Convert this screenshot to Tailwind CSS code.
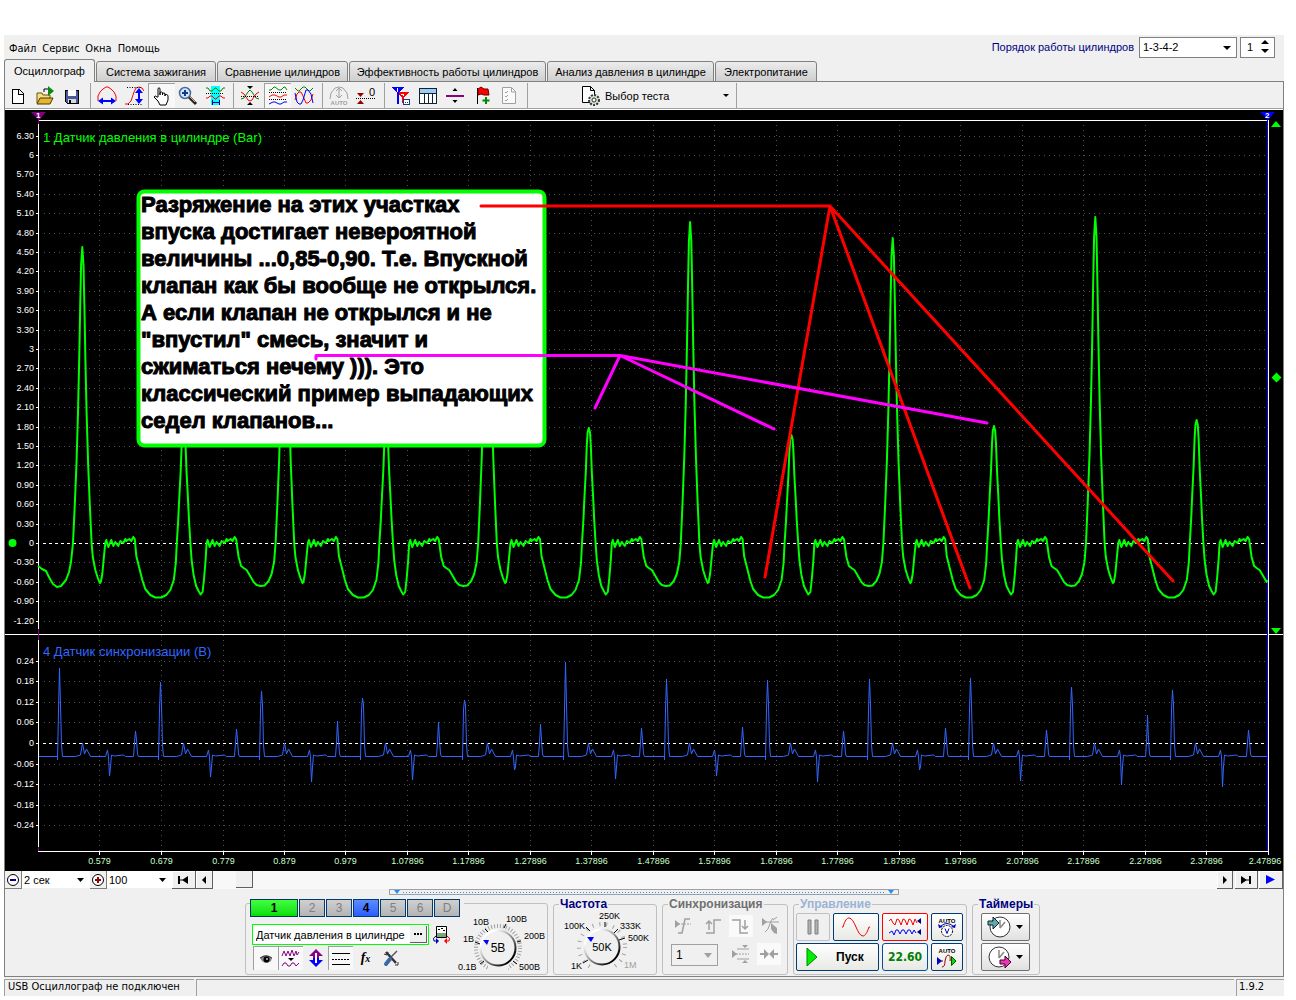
<!DOCTYPE html>
<html lang="ru">
<head>
<meta charset="utf-8">
<title>USB Осциллограф</title>
<script src="https://cdn.jsdelivr.net/npm/@tailwindcss/browser@4"></script>
</head>
<body class="bg-white pt-[35px] text-[11px] leading-[14px] text-black font-['Liberation_Sans',Arial,sans-serif]">
<div class="mr-3 ml-1 bg-[#f0f0f0]">

  <!-- menu bar -->
  <header class="flex h-6 items-center justify-between pr-[9px] pl-[5px]">
    <nav class="flex gap-[6px] pt-[3px] font-['DejaVu_Sans_Condensed','DejaVu_Sans',sans-serif]">
      <a href="#">Файл</a><a href="#">Сервис</a><a href="#">Окна</a><a href="#">Помощь</a>
    </nav>
    <div class="flex items-center gap-[3px]">
      <label for="order" class="mr-[2px] text-[#000080]">Порядок работы цилиндров</label>
      <div class="relative">
        <select id="order" class="h-[21px] w-[98px] appearance-none border border-[#808080] bg-white px-[3px]"><option>1-3-4-2</option></select>
        <svg class="pointer-events-none absolute top-[9px] right-[6px]" width="8" height="5"><path d="M0 0h8L4 4z"/></svg>
      </div>
      <div class="relative">
        <input aria-label="Номер цилиндра" value="1" class="h-[21px] w-[35px] border border-[#808080] bg-white px-[6px]">
        <svg class="pointer-events-none absolute top-[3px] right-[6px]" width="8" height="14"><path d="M0 4h8L4 0zM0 9h8L4 13z"/></svg>
      </div>
    </div>
  </header>

  <!-- tabs -->
  <div role="tablist" class="relative flex items-end gap-px">
    <div class="absolute inset-x-0 bottom-0 border-b border-[#808080]"></div>
    <button role="tab" class="relative h-[23px] w-[91px] rounded-t-[3px] border border-b-0 border-[#808080] bg-[#f0f0f0]">Осциллограф</button>
    <button role="tab" class="relative h-[21px] w-[120px] rounded-t-[3px] border border-[#808080] bg-linear-to-b from-[#ececec] to-[#cfcfcf]">Система зажигания</button>
    <button role="tab" class="relative h-[21px] w-[131px] rounded-t-[3px] border border-[#808080] bg-linear-to-b from-[#ececec] to-[#cfcfcf]">Сравнение цилиндров</button>
    <button role="tab" class="relative h-[21px] w-[197px] rounded-t-[3px] border border-[#808080] bg-linear-to-b from-[#ececec] to-[#cfcfcf]">Эффективность работы цилиндров</button>
    <button role="tab" class="relative h-[21px] w-[167px] rounded-t-[3px] border border-[#808080] bg-linear-to-b from-[#ececec] to-[#cfcfcf]">Анализ давления в цилиндре</button>
    <button role="tab" class="relative h-[21px] w-[102px] rounded-t-[3px] border border-[#808080] bg-linear-to-b from-[#ececec] to-[#cfcfcf]">Электропитание</button>
  </div>

  <main class="border-x border-b border-[#808080]">
    <!-- toolbar -->
    <div class="flex h-7 items-center border-b border-white shadow-[inset_0_-1px_#a0a0a0]">
      <button aria-label="Новый" class="h-[25px] w-[27px] pl-[2px]"><svg width="20" height="20" shape-rendering="crispEdges"><path d="M5 3h7l4 4v10H5zM11 3v5h5" fill="#fff" stroke="#000"/></svg></button>
      <button aria-label="Открыть" class="h-[25px] w-[27px] pl-[3px]"><svg width="20" height="20"><path d="M2 17V7h5l1 2h7v8z" fill="#f5e08a" stroke="#665500"/><path d="M2 18l3-6h13l-3 6z" fill="#e0b830" stroke="#553300"/><path d="M13 0l6 5-6 5z" fill="#0a8a10"/><path d="M9 6V3h4" fill="none" stroke="#000"/></svg></button>
      <button aria-label="Сохранить" class="h-[25px] w-[27px] pl-[2px]"><svg width="20" height="20" shape-rendering="crispEdges"><path d="M4 4h13v13H6l-2-2z" fill="#4a5c98" stroke="#000"/><path d="M7 4h8v6H7z" fill="#fff"/><path d="M7 13h8v4H7z" fill="#d8d8d8"/><path d="M8 14h2v3H8z" fill="#000"/></svg></button>
      <span class="mr-[3px] ml-1 h-[25px] w-px bg-[#a0a0a0]"></span>
      <button aria-label="Ширина" class="h-[25px] w-[27px] pl-[3px]"><svg width="20" height="20"><path d="M1 15V10l2-4 3-3 3-2h2l3 2 3 3 2 4v5" fill="none" stroke="#f00"/><path d="M4 15h12" stroke="#00f" stroke-width="2"/><path d="M1 15l5-3.500v7zM19 15l-5-3.500v7z" fill="#00f"/></svg></button>
      <button aria-label="Высота" class="h-[25px] w-[27px] pl-[3px]"><svg width="20" height="20"><path d="M1 18h3l3-3 3-9 2-4 3-1 3 1 2 3" fill="none" stroke="#f00"/><path d="M3 1.500h14M4 18.500h14" stroke="#000" stroke-dasharray="1 1.500"/><path d="M15 5v10" stroke="#00f" stroke-width="2"/><path d="M15 2l-4 5h8zM15 18l-4-5h8z" fill="#00f"/></svg></button>
      <button aria-label="Рука" class="h-[25px] w-[27px] border-t border-l border-[#a0a0a0] bg-[#f8f8f8] pl-[3px]"><svg width="20" height="20"><path d="M6 11V2.500Q7 1 8 2.500V9V6.500Q9.500 5.500 10.500 6.500V9V7.500Q12 6.500 13 7.500V10V8.500Q14.500 8 16 9.500V14L14 19H8L6 15 2 11Q3 9 5 11z" fill="#fff" stroke="#000"/></svg></button>
      <button aria-label="Лупа" class="h-[25px] w-[27px] pl-[3px]"><svg width="20" height="20"><path d="M11 11l7 7" stroke="#222" stroke-width="3"/><path d="M12 11l5 5" stroke="#e0b050"/><circle cx="7" cy="7" r="5.500" fill="#cfe6ff" stroke="#4a6a98" stroke-width="1.500"/><path d="M4 7h6M7 4v6" stroke="#123a90" stroke-width="2"/></svg></button>
      <button aria-label="Участок" class="h-[25px] w-[27px] pl-[3px]"><svg width="20" height="20"><path d="M6 0h9v19H6z" fill="#0ff"/><path d="M1 2h2l2 3h2l3-3h1l3 3h2l2-3h2" fill="none" stroke="#080"/><path d="M1 7.500h18" stroke="#000" stroke-dasharray="1 1"/><path d="M1 12h2l2-2h2l3 3h1l3-3h2l2 2h2" fill="none" stroke="#f00"/><path d="M7 16.500h8M7.500 14v5M14.500 14v5" stroke="#008"/></svg></button>
      <span class="mr-[3px] ml-1 h-[25px] w-px bg-[#a0a0a0]"></span>
      <button aria-label="Совместить" class="h-[25px] w-[27px] pl-[3px]"><svg width="20" height="20"><path d="M1 13l3-1 4-6 2-2 2 2 4 6 3 1" fill="none" stroke="#080"/><path d="M1 6l3 2 4 6 2 1 2-1 4-6 3-2" fill="none" stroke="#f00"/><path d="M1 10.500h18" stroke="#000" stroke-dasharray="1 1"/><path d="M7 0h6l-3 3zM7 19h6l-3-3z"/></svg></button>
      <button aria-label="Разделить" class="h-[25px] w-[27px] border-t border-l border-[#a0a0a0] bg-[#f8f8f8] pl-[3px]"><svg width="20" height="20"><path d="M1 4h2l3-3h1l4 3h2l3-3h1l2 3" fill="none" stroke="#080"/><path d="M1 11l3-2h3l4 2h2l3-2h3" fill="none" stroke="#f00"/><path d="M1 18l4-2h2l4 2h2l3-2h3" fill="none" stroke="#00f"/><path d="M1 6.500h18M1 13.500h18" stroke="#000" stroke-dasharray="1 1"/></svg></button>
      <button aria-label="Наложить" class="h-[25px] w-[27px] pl-[3px]"><svg width="20" height="20"><path d="M1 2l3 3h1l4-4h2l4 4h1l3-3" fill="none" stroke="#080"/><path d="M1 14l2-6 2-2h2l2 4 3 7h2l3-3 2-6" fill="none" stroke="#f00"/><path d="M1 7l2 9 2 2h2l2-4 3-10h2l3 4 2 9" fill="none" stroke="#00f"/></svg></button>
      <span class="mr-[3px] ml-1 h-[25px] w-px bg-[#a0a0a0]"></span>
      <button aria-label="Авто" class="h-[25px] w-[27px] pl-[3px]"><svg width="20" height="20"><path d="M1 13l1-6 4-5 4-1 4 1 4 5 1 6M10 2v10M7 5l3-3 3 3M7 9l3 3 3-3" fill="none" stroke="#a0a0a0"/><text x="10" y="19" text-anchor="middle" font-size="6" font-weight="700" fill="#a0a0a0">AUTO</text></svg></button>
      <button aria-label="Ноль" class="h-[25px] w-[27px] pl-[3px]"><svg width="20" height="20"><path d="M1 7h7L4.500 11zM1 18h7L4.500 14z" fill="#900"/><path d="M0 12.500h20" stroke="#000" stroke-dasharray="1 1"/><text x="13" y="10" font-size="11">0</text></svg></button>
      <span class="mr-[3px] ml-1 h-[25px] w-px bg-[#a0a0a0]"></span>
      <button aria-label="Маркеры" class="h-[25px] w-[27px] pl-[3px]"><svg width="20" height="20" shape-rendering="crispEdges"><path d="M5 6h13l-5 5v6h-2v-6z" fill="#f00"/><path d="M0 1h13L8 6v12H6V6z" fill="#00f"/><path d="M6.500 2v4M10 8h2v2" fill="none" stroke="#fff"/><path d="M12.500 13.500h6v5h-6z" fill="#fff" stroke="#123a90"/><path d="M14 16.500h4" stroke="#123a90" stroke-dasharray="1 1"/></svg></button>
      <button aria-label="Таблица" class="h-[25px] w-[27px] pl-[3px]"><svg width="20" height="20" shape-rendering="crispEdges"><path d="M1 2h17v15H1z" fill="#fff" stroke="#123"/><path d="M2 3h16v4H2z" fill="#9accf4"/><path d="M1 7h17M6 7v10M10 7v10M14 7v10" stroke="#123"/></svg></button>
      <button aria-label="Линия" class="h-[25px] w-[27px] pl-[3px]"><svg width="20" height="20"><path d="M1 9h18v2H1z" fill="#808"/><path d="M7.500 5h5L10 2zM7.500 14h5L10 17z"/></svg></button>
      <button aria-label="Флаг" class="h-[25px] w-[27px] pl-[3px]"><svg width="20" height="20"><path d="M5.500 2v16" stroke="#000"/><path d="M6 3l3-2 3 2h4l1 6h-5l-3-1-3 1z" fill="#f00" stroke="#600"/><path d="M14 11v7M10.500 14.500h7" stroke="#080" stroke-width="2"/></svg></button>
      <button aria-label="Список" class="h-[25px] w-[27px] pl-[3px]"><svg width="20" height="20"><path d="M3.500 1.500h9l4 4v12h-13z" fill="#fafafa" stroke="#a0a0a0"/><path d="M6 6l1 1 2-2M6 10l1 1 2-2M6 14l1 1 2-2M12.500 2v4h4" fill="none" stroke="#a0a0a0"/></svg></button>
      <span class="mr-[3px] ml-1 h-[25px] w-px bg-[#a0a0a0]"></span>
      <button class="flex h-[25px] w-[201px] items-center pl-[49px]">
        <svg width="22" height="20"><path d="M2.500.500h8l4 4v12h-12zM10.500.500v4h4" fill="#fff" stroke="#000"/><circle cx="14" cy="14" r="5" fill="#cfe0cf" stroke="#333" stroke-width="2" stroke-dasharray="2 1.300"/><circle cx="14" cy="14" r="2" fill="#fff" stroke="#333"/></svg>
        <span class="ml-[3px]">Выбор теста</span>
        <svg class="mr-[3px] ml-auto" width="6" height="4"><path d="M0 0h6L3 3z"/></svg>
      </button>
      <span class="ml-1 h-[25px] w-px bg-[#a0a0a0]"></span>
    </div>

    <!-- oscillogram -->
    <svg id="chart" class="block h-auto w-full bg-black" viewBox="5 110 1278 761" font-family="Liberation Sans, Arial, sans-serif">
      <g id="grid" stroke="#505050" stroke-dasharray="1 4" shape-rendering="crispEdges"></g>
      <g id="axes" stroke="#fff" shape-rendering="crispEdges">
        <path d="M38.500 120.500H1268.500V851.500H38.500zM5 634.500H1283" fill="none"/>
        <path d="M43 543.500H1267M43 743.500H1267" stroke-dasharray="3 3"/>
        <path d="M1267.500 116V851" stroke="#00f"/>
        <path d="M38.500 112v12M38.500 629v11M38.500 847v4" stroke="#800080"/>
      </g>
      <path id="sync" fill="none" stroke="#3366ff" stroke-width="1"/>
      <path id="pressure" fill="none" stroke="#00ff00" stroke-width="2" stroke-linejoin="round"/>
      <g id="yl" font-size="9" fill="#fff" text-anchor="end"></g>
      <g id="xl" font-size="9" fill="#ccffcc" text-anchor="middle"></g>
      <text x="43" y="142" font-size="13" fill="#0f0">1 Датчик давления в цилиндре (Bar)</text>
      <text x="43" y="656" font-size="13" fill="#3366ff">4 Датчик синхронизации (В)</text>
      <path d="M31 112h15l-7 8z" fill="#800080"/><path d="M1260 112h15l-7 8z" fill="#00f"/>
      <text x="36" y="118" font-size="8" font-weight="700" fill="#fff">1</text><text x="1265" y="118" font-size="8" font-weight="700" fill="#fff">2</text>
      <g fill="#0f0"><path d="M1271 127h10l-5-6zM1271 628h10l-5 6zM1271.500 377.500l5-5 5 5-5 5z"/><circle cx="12.500" cy="543" r="4"/></g>
      <rect x="138.500" y="191.500" width="406" height="254" rx="6" fill="#fff" stroke="#0f0" stroke-width="4"/>
      <g id="note" font-size="22" font-weight="700" stroke="#000" stroke-width="1" stroke-linejoin="round">
        <text x="141" y="212">Разряжение на этих участках</text>
        <text x="141" y="239">впуска достигает невероятной</text>
        <text x="141" y="266">величины ...0,85-0,90. Т.е. Впускной</text>
        <text x="141" y="293">клапан как бы вообще не открылся.</text>
        <text x="141" y="320">А если клапан не открылся и не</text>
        <text x="141" y="347">"впустил" смесь, значит и</text>
        <text x="141" y="374">сжиматься нечему ))). Это</text>
        <text x="141" y="401">классический пример выпадающих</text>
        <text x="141" y="428">седел клапанов...</text>
      </g>
      <g fill="none" stroke-width="3" stroke-linecap="round" stroke-linejoin="round">
        <path stroke="#f00" d="M481 206H830M765 577L830 206L970 588M830 206L1173 581"/>
        <path stroke="#f0f" d="M316 359V355.500H620L595 408M620 355.500L774 429M620 355.500L987 423"/>
      </g>
    </svg>

    <!-- navigation bar -->
    <div class="flex h-[18px] items-stretch">
      <button aria-label="Уменьшить" class="w-[17px] border-r border-b border-[#808080]"><svg width="16" height="16"><circle cx="8" cy="8" r="5.500" fill="#fff" stroke="#000"/><path d="M5 8h6" stroke="#008" stroke-width="2"/></svg></button>
      <div class="relative w-[68px]"><select aria-label="Развёртка" class="h-[17px] w-full appearance-none bg-white pl-[2px]"><option>2 сек</option></select><svg class="pointer-events-none absolute top-[7px] right-[6px]" width="7" height="4"><path d="M0 0h7L3.500 4z"/></svg></div>
      <button aria-label="Увеличить" class="w-[17px] border-r border-b border-[#808080]"><svg width="16" height="16"><circle cx="8" cy="8" r="5.500" fill="#fff" stroke="#000"/><path d="M5 8h6M8 5v6" stroke="#900" stroke-width="2"/></svg></button>
      <div class="relative w-[65px]"><select aria-label="Масштаб" class="h-[17px] w-full appearance-none bg-white pl-[2px]"><option>100</option></select><svg class="pointer-events-none absolute top-[7px] right-[6px]" width="7" height="4"><path d="M0 0h7L3.500 4z"/></svg></div>
      <button aria-label="В начало" class="w-6 border-r border-b border-[#606060] shadow-[inset_1px_1px_#fff]"><svg class="mx-auto" width="11" height="8"><path d="M0 0h2v8H0zM2 3.500h4v1H2zM4 4l6-4v8z"/></svg></button>
      <button aria-label="Влево" class="w-[17px] border-r border-b border-[#606060] shadow-[inset_1px_1px_#fff]"><svg class="mx-auto" width="4" height="8"><path d="M4 0v8L0 4z"/></svg></button>
      <div class="flex-1 bg-[#f8f8f8] pl-[23px]"><div class="h-[17px] w-[17px] border-r border-b border-[#606060] bg-[#f0f0f0]"></div></div>
      <button aria-label="Вправо" class="mr-[2px] w-4 border-r border-b border-[#606060] shadow-[inset_1px_1px_#fff]"><svg class="mx-auto" width="4" height="8"><path d="M0 0v8L4 4z"/></svg></button>
      <button aria-label="В конец" class="mr-px w-[23px] border-r border-b border-[#606060] shadow-[inset_1px_1px_#fff]"><svg class="mx-auto" width="11" height="8"><path d="M0 0l6 4-6 4zM5 3.500h3v1H5zM8 0h2v8H8z"/></svg></button>
      <button aria-label="Пуск просмотра" class="w-6 border-r border-b border-[#606060] shadow-[inset_1px_1px_#fff]"><svg class="mx-auto" width="9" height="9"><path d="M0 0l9 4.500L0 9z" fill="#00f"/></svg></button>
    </div>

    <!-- splitter handle -->
    <div class="flex h-[6px] justify-center">
      <div class="flex w-[510px] items-center justify-between border border-[#a0a0a0] px-1">
        <svg width="6" height="4"><path d="M0 0h6L3 4z" fill="#1e90ff"/></svg>
        <svg class="mx-[3px] h-px flex-1" shape-rendering="crispEdges"><line x1="0" y1="0.500" x2="100%" y2="0.500" stroke="#1e90ff" stroke-dasharray="1 2"/></svg>
        <svg width="6" height="4"><path d="M0 0h6L3 4z" fill="#1e90ff"/></svg>
      </div>
    </div>

    <!-- control panel -->
    <div class="flex justify-center gap-[5px] pt-[3px] pr-[3px] pb-px">

      <section class="mt-[5px] flex h-[72px] w-[303px] rounded-[3px] border border-[#c0c0c0]">
        <div class="w-[210px] pl-1">
          <div class="-mt-[5px] flex h-[18px] w-[214px] gap-px bg-[#f0f0f0]">
            <button class="w-12 border border-[#003366] bg-linear-to-b from-[#40ff40] to-[#00dd00] text-[12px] font-bold">1</button>
            <button class="w-[26px] border border-[#003c74] bg-linear-to-b from-[#d0d0d0] to-[#b4b4b4] text-[12px] text-[#808080]">2</button>
            <button class="w-[26px] border border-[#003c74] bg-linear-to-b from-[#d0d0d0] to-[#b4b4b4] text-[12px] text-[#808080]">3</button>
            <button class="w-[26px] border border-[#003c74] bg-linear-to-b from-[#5c8cff] to-[#2c5cff] text-[12px] font-bold">4</button>
            <button class="w-[26px] border border-[#003c74] bg-linear-to-b from-[#d0d0d0] to-[#b4b4b4] text-[12px] text-[#808080]">5</button>
            <button class="w-[26px] border border-[#003c74] bg-linear-to-b from-[#d0d0d0] to-[#b4b4b4] text-[12px] text-[#808080]">6</button>
            <button class="w-[26px] border border-[#003c74] bg-linear-to-b from-[#d0d0d0] to-[#b4b4b4] text-[12px] text-[#808080]">D</button>
          </div>
          <div class="mt-[7px] ml-[2px] flex h-[21px] items-center">
            <div class="flex h-[21px] w-[177px] items-center border border-[#0f0] bg-white pr-px">
              <input aria-label="Датчик" value="Датчик давления в цилиндре" class="w-full min-w-0 flex-1 pl-[3px]">
              <button aria-label="Выбрать датчик" class="flex h-[17px] w-[17px] items-center justify-center border-r border-b border-[#606060] bg-[#f0f0f0]"><svg width="8" height="2"><path d="M0 0h2v2H0zM3 0h2v2H3zM6 0h2v2H6z"/></svg></button>
            </div>
            <button aria-label="Прибор" class="ml-[3px]"><svg width="20" height="20"><path d="M4.500 1.500h10v11h-10z" fill="#fff" stroke="#000"/><path d="M5 8h9v4H5z" fill="#79a878"/><path d="M6 4.500h2M9 3.500h2M11 5.500h2" stroke="#000"/><path d="M4 11q-4 2-2 5h2" fill="none" stroke="#008"/><path d="M4 13l3 3-3 3z" fill="#00c"/><path d="M15 11q4 2 2 5h-2" fill="none" stroke="#f00"/><path d="M15 13l-3 3 3 3z" fill="#f00"/></svg></button>
          </div>
          <div class="mt-px ml-[3px] flex h-6">
            <button aria-label="Показать" class="w-[25px] border-t border-l border-[#a0a0a0] bg-[#f8f8f8]"><svg class="mx-auto" width="14" height="10"><path d="M1 4q6-6 12 0l-1 3q-5 4-9 0z" fill="#888"/><circle cx="7.500" cy="5.500" r="3"/><path d="M1 4q6-4 12 0" fill="none" stroke="#333"/><circle cx="8" cy="5" r="1" fill="#c9c9c9"/></svg></button>
            <button aria-label="Фильтр" class="w-[25px] border-t border-l border-[#a0a0a0] bg-[#f8f8f8]"><svg class="mx-auto" width="20" height="20"><path d="M1 7l2-5 2 5 2-5 2 5 2-6 2 6 2-5 1 4 2-3M1 17l2-3 2 0 2 3 2 0 2-3 2 0 2 3 3-3" fill="none" stroke="#808"/><path d="M7 9h6l-3 3z"/></svg></button>
            <button aria-label="Смещение" class="w-[25px]"><svg class="mx-auto" width="18" height="18"><path d="M9 0l7 7H2zM6 7h6v2H6z" fill="#808"/><path d="M9 18l7-7H2zM6 9h6v2H6z" fill="#00f"/><path d="M9 4v10" stroke="#fff" stroke-width="2"/></svg></button>
            <button aria-label="Линии" class="w-[25px] border-t border-l border-[#a0a0a0] bg-[#f8f8f8]"><svg class="mx-auto" width="18" height="16" shape-rendering="crispEdges"><path d="M0 2.500h18M0 13.500h18" stroke="#000"/><path d="M0 8.500h18" stroke="#000" stroke-dasharray="2 1"/></svg></button>
            <button aria-label="Функция" class="w-[25px] font-['Liberation_Serif',serif] text-[14px] font-bold italic">f<span class="text-[10px]">x</span></button>
            <button aria-label="Настройка" class="w-[25px]"><svg class="mx-auto" width="18" height="18"><path d="M4 3l10 11" stroke="#333" stroke-width="2.500"/><path d="M2 5l3 1 1-3M13 16l3 0 0-3" fill="none" stroke="#333"/><path d="M15 2L8 9" stroke="#555" stroke-width="1.500"/><path d="M8 10l-4 5" stroke="#3a68a8" stroke-width="4" stroke-linecap="round"/></svg></button>
          </div>
        </div>
        <svg class="mt-[3px]" width="91" height="66" viewBox="456 907 91 66" font-size="9">
          <defs><linearGradient id="rim" x1="0" y1="0" x2="1" y2="1"><stop offset="0.200" stop-color="#fff"/><stop offset="0.500" stop-color="#999"/><stop offset="0.850" stop-color="#000"/></linearGradient></defs>
          <circle cx="498" cy="948" r="22" fill="none" stroke="#a0a0a0" stroke-width="4" stroke-dasharray="1 2"/>
          <path d="M488 962h20v12h-20z" fill="#f0f0f0"/>
          <path d="M484 961l-4 3M480 944l-5-2M488 932l-3-3M504 928l2-4M517 942l4-1M513 961l4 3" stroke="#000"/>
          <circle cx="498" cy="948" r="17.500" fill="#f0f0f0" stroke="url(#rim)" stroke-width="2"/>
          <path d="M483 940h6l-2 5z" fill="#00f"/>
          <text x="458" y="970">0.1В</text><text x="463" y="942">1В</text><text x="473" y="925">10В</text><text x="506" y="922">100В</text><text x="524" y="939">200В</text><text x="519" y="970">500В</text>
          <text x="498" y="952" font-size="12" text-anchor="middle">5В</text>
        </svg>
      </section>

      <fieldset class="h-[77px] w-[104px] rounded-[3px] border border-[#c0c0c0]">
        <legend class="ml-[5px] px-px text-[12px] leading-[12px] font-bold text-[#000080]">Частота</legend>
        <svg width="102" height="62" viewBox="554 911 102 62" font-size="9">
          <circle cx="602" cy="948" r="23" fill="none" stroke="#a0a0a0" stroke-width="4" stroke-dasharray="1 6"/>
          <path d="M593 962h18v12h-18z" fill="#f0f0f0"/>
          <path d="M588 961l-5 3M590 932l-4-4M605 928v-5M614 934l4-4M619 941l6-2" stroke="#000"/>
          <circle cx="602" cy="948" r="17.500" fill="#f0f0f0" stroke="url(#rim)" stroke-width="2"/>
          <path d="M587 938h7l-3 5z" fill="#00f"/>
          <text x="571" y="970">1K</text><text x="564" y="930">100K</text><text x="599" y="920">250K</text><text x="620" y="930">333K</text><text x="628" y="942">500K</text><text x="624" y="969" fill="#a0a0a0">1M</text>
          <text x="602" y="952" font-size="11" text-anchor="middle">50K</text>
        </svg>
      </fieldset>

      <fieldset class="h-[77px] w-[126px] rounded-[3px] border border-[#c0c0c0]">
        <legend class="ml-[5px] px-px text-[12px] leading-[12px] font-bold text-[#707070]">Синхронизация</legend>
        <div class="mt-[5px] ml-[6px] grid w-[116px] grid-cols-[28px_32px_28px_28px] gap-y-[6px]">
          <button aria-label="Синхро 1" class="h-[22px]"><svg class="mx-auto" width="20" height="20"><path d="M2 8h16" stroke="#a0a0a0" stroke-dasharray="2 1"/><path d="M2 4l5 4-5 4z" fill="#a0a0a0"/><path d="M5 17h4l3-14h5" fill="none" stroke="#a0a0a0" stroke-width="1.500"/></svg></button>
          <button aria-label="Фронт" class="h-[22px]"><svg class="mx-auto" width="20" height="20"><path d="M3 17h8V4h7M6 14V5M3 8l3-3 3 3" fill="none" stroke="#a0a0a0" stroke-width="1.500"/></svg></button>
          <button aria-label="Спад" class="h-[22px] w-6 bg-[#fafafa]"><svg class="mx-auto" width="20" height="20"><path d="M1 4h8v13h8M14 4v9M11 10l3 3 3-3" fill="none" stroke="#a0a0a0" stroke-width="1.500"/></svg></button>
          <button aria-label="Синхро 2" class="h-[22px]"><svg class="mx-auto" width="20" height="20"><path d="M2 6h16M4 16l3-3 3-8 2-3M12 4l4-3" fill="none" stroke="#a0a0a0"/><path d="M1 2l5 4-5 4zM10 7l6 5v6l-3-1-3-4z" fill="#a0a0a0"/></svg></button>
          <div class="relative col-span-2"><select aria-label="Канал" class="mt-px ml-[2px] h-[22px] w-[47px] appearance-none border border-[#a0a0a0] bg-[#f0f0f0] pl-1 text-[12px]"><option>1</option></select><svg class="pointer-events-none absolute top-[10px] left-[35px]" width="8" height="5"><path d="M0 0h8L4 5z" fill="#a0a0a0"/></svg></div>
          <button aria-label="Уровень" class="h-[22px] w-6"><svg class="mx-auto" width="20" height="20"><path d="M1 6l5 4-5 4z" fill="#a0a0a0"/><path d="M5 10h13" stroke="#a0a0a0" stroke-dasharray="2 1"/><path d="M6 5h12M6 15h12" stroke="#a0a0a0"/><path d="M11 1h6l-3 3zM11 19h6l-3-3z" fill="#a0a0a0"/></svg></button>
          <button aria-label="Центр" class="h-[22px] w-6 bg-[#fafafa]"><svg class="mx-auto" width="20" height="20"><path d="M1 9h4V5l5 5-5 5v-4H1zM19 9h-4V5l-5 5 5 5v-4h4z" fill="#a0a0a0"/></svg></button>
        </div>
      </fieldset>

      <fieldset class="h-[77px] w-[174px] rounded-[3px] border border-[#c0c0c0]">
        <legend class="ml-[5px] px-px text-[12px] leading-[12px] font-bold text-[#9ab4d4]">Управление</legend>
        <div class="mt-[3px] ml-[2px] grid w-[168px] grid-cols-[34px_46px_46px_32px] gap-x-[3px] gap-y-[2px]">
          <button aria-label="Пауза" class="h-7 rounded-[2px] border border-[#c0c0c0]"><svg class="mx-auto" width="12" height="16"><path d="M1 1h3v14H1zM8 1h3v14H8z" fill="#b0b0b0" stroke="#808080"/></svg></button>
          <button aria-label="Синус" class="h-7 rounded-[2px] border border-[#003c74] bg-linear-to-b from-white to-[#e8e8e4]"><svg class="mx-auto" width="30" height="20"><path d="M1 10h1C4 3 6 1 8 1c6 0 8 18 14 18 2 0 4-3 6-9h1" fill="none" stroke="#e00"/></svg></button>
          <button aria-label="Непрерывно" class="h-7 rounded-[2px] border border-[#f00] bg-linear-to-b from-white to-[#e8e8e4]"><svg class="mx-auto" width="34" height="22"><path d="M1 5l2-2 2 4 2 2 2-6 2 1 2 5 2-6 2 1 2 5 2-6 2 1 2 5 2-6 2 4" fill="none" stroke="#f00"/><path d="M1 17l3-2 2 4 2-5 2 0 2 4 2-4 2 0 2 4 2-4 2 0 2 4 2-4 2 3" fill="none" stroke="#00f"/><path d="M33 2v6l-4-3zM33 13v6l-4-3z" fill="#008"/></svg></button>
          <button aria-label="Авто предел" class="h-7 rounded-[2px] border border-[#003c74] bg-linear-to-b from-white to-[#e8e8e4]"><svg class="mx-auto" width="22" height="24"><text x="11" y="8" text-anchor="middle" font-size="6" font-weight="700">AUTO</text><circle cx="11" cy="16" r="5.500" fill="#fff" stroke="#000" stroke-dasharray="2 1"/><path d="M9 13.500l2 5 2-5M5 11q6-5 12 0" fill="none" stroke="#00c"/><path d="M2 9l1 4 4-1zM20 9l-1 4-4-1z" fill="#00c"/></svg></button>
          <button class="col-span-2 flex h-7 items-center rounded-[2px] border border-[#003c74] bg-linear-to-b from-white to-[#e8e8e4] pl-[9px] text-[12px] font-bold"><svg width="12" height="18"><path d="M1 0l10 9-10 9z" fill="#0e0" stroke="#080"/></svg><span class="ml-[18px]">Пуск</span></button>
          <button class="h-7 rounded-[3px] border border-[#0050a0] bg-linear-to-b from-white to-[#e8e8e4] font-['DejaVu_Sans_Condensed','DejaVu_Sans',sans-serif] text-[12px] font-bold text-[#008000]">22.60</button>
          <button aria-label="Авто синхронизация" class="h-7 rounded-[2px] border border-[#003c74] bg-linear-to-b from-white to-[#e8e8e4]"><svg class="mx-auto" width="22" height="24"><text x="11" y="8" text-anchor="middle" font-size="6" font-weight="700">AUTO</text><path d="M5 16h2M6 22q3 0 3-6 1-6 3-6 3 0 2 6" fill="none" stroke="#900"/><path d="M1 12l5 4-5 4z" fill="#00c"/><path d="M15.500 11.500l4.500 4.500-4.500 4.500z" fill="#0d0" stroke="#050"/></svg></button>
        </div>
      </fieldset>

      <fieldset class="h-[77px] w-[68px] rounded-[3px] border border-[#c0c0c0]">
        <legend class="ml-[5px] px-px text-[12px] leading-[12px] font-bold text-[#000080]">Таймеры</legend>
        <div class="mt-[3px] ml-2 grid w-[49px] gap-[2px]">
          <button aria-label="Таймер старта" class="flex h-7 items-center gap-1 rounded-[2px] border border-[#707070] bg-linear-to-b from-white to-[#e0e0e0] pl-[5px]"><svg width="25" height="24"><circle cx="13" cy="12" r="10" fill="#fff" stroke="#333"/><path d="M13 13V5M13 13l5-6" stroke="#888" stroke-width="1.500"/><path d="M1 6h5V2l6 6-6 6v-4H1z" fill="#5faaa8" stroke="#123"/></svg><svg width="7" height="4"><path d="M0 0h7L3.500 4z"/></svg></button>
          <button aria-label="Таймер остановки" class="flex h-7 items-center gap-1 rounded-[2px] border border-[#707070] bg-linear-to-b from-white to-[#e0e0e0] pl-[5px]"><svg width="25" height="24"><circle cx="12" cy="12" r="10" fill="#fff" stroke="#333"/><path d="M12 13V5M12 13l5-6" stroke="#888" stroke-width="1.500"/><path d="M13 15h5v-4l6 6-6 6v-4h-5z" fill="#e838b8" stroke="#402"/></svg><svg width="7" height="4"><path d="M0 0h7L3.500 4z"/></svg></button>
        </div>
      </fieldset>
    </div>
  </main>

  <!-- status bar -->
  <footer class="flex h-[19px] gap-[2px] pt-[2px] font-['DejaVu_Sans_Condensed','DejaVu_Sans',sans-serif]">
    <div class="w-[190px] border-t border-l border-[#a0a0a0] pl-[3px]">USB Осциллограф не подключен</div>
    <div class="flex-1 border-t border-l border-[#a0a0a0]"></div>
    <div class="w-12 border-t border-l border-[#a0a0a0] pl-[2px]">1.9.2</div>
  </footer>
</div>

<script>
const NS = 'http://www.w3.org/2000/svg';
const el = (parent, name, attrs, text) => {
  const e = document.createElementNS(NS, name);
  for (const k in attrs) e.setAttribute(k, attrs[k]);
  if (text !== undefined) e.textContent = text;
  document.getElementById(parent).appendChild(e);
};

// time axis: one division is 0.1 s; the last label is kept inside the right edge
for (let i = 0; i < 20; i++) {
  const x = Math.floor(100.05 + i * 61.48) + (i ? 0.5 : -0.5);
  if (i < 19) el('grid', 'path', { d: `M${x} 125V851` });
  el('axes', 'path', { d: `M${x} 852v3` });
  const t = 0.579 + i * 0.1;
  el('xl', 'text', { x: Math.min(x, 1265), y: 864 }, i < 5 ? t.toFixed(3) : (t - 0.00004).toFixed(5));
}
// value axes of both channels
const scale = (top, step, from, to, mul) => {
  for (let k = from; k >= to; k--) {
    const y = Math.round(top - k * step) + 0.5;
    if (k) el('grid', 'path', { d: `M44 ${y}H1267` });
    el('axes', 'path', { d: `M36 ${y}h3` });
    const v = k * mul;
    el('yl', 'text', { x: 34, y: y + 2.5 }, Number.isInteger(+v.toFixed(2)) ? v.toFixed(0) : v.toFixed(2));
  }
};
scale(543, 19.4, 21, -4, 0.3);
scale(743, 20.55, 4, -4, 0.06);

// cylinder pressure: tall and short compression peaks alternate
const tops = [247, 430, 240, 430, 230, 428, 222, 435, 238, 426, 217, 420];
const noise = [[0,543],[1,540],[3,547],[6,540],[8,546],[10,542],[13,546],[15,541],[18,543],[20,539],[21,541],[24,539],[26,541],[28,537],[29.5,539]];
let pts = [[38,566],[42,569],[46,571],[50,579],[53,584],[57,587],[61,586],[66,580],[69,572],[71,562]];
tops.forEach((top, i) => {
  const c = 82.3 + i * 101.3, H = 543 - top, tall = i % 2 === 0;
  const add = a => a.forEach(p => pts.push([c + p[0], p[1]]));
  const prof = tall
    ? [[0,9.3],[.13,7.5],[.27,5.8],[.44,4.3],[.62,3.1],[.8,2.1],[.94,1.2],[1,0]]
    : [[0,6.8],[.2,5.4],[.37,4.5],[.62,3],[.85,2],[.96,1.2],[1,0]];
  prof.forEach(([f, d]) => pts.push([c - d, 543 - f * H]));
  prof.slice(0, -1).reverse().forEach(([f, d]) => pts.push([c + d, 543 - f * H]));
  if (tall) {
    add([[10.5,557],[13,570],[15.5,578],[17.5,583],[18.5,582],[20,574],[21.5,558]]);
    noise.forEach(([x, y]) => pts.push([c + 23 + x, y]));
    add([[54,556],[57,568],[60,580],[63,589],[68,595],[73,597.5],[79,597.5],[84,595],[88,590],[91.5,580],[93.5,563]]);
  } else {
    add([[8,560],[10,575],[12.5,586],[15,591],[17,594.5],[19,592],[20.5,578],[22,560]]);
    noise.forEach(([x, y]) => pts.push([c + 23 + x, y]));
    add([[55,557],[57.5,566],[60,568],[63,570],[66,575],[70,582],[73,585],[77,586],[81,585.5],[85,581],[88,574],[90.5,562]]);
  }
});
pts = pts.filter(p => p[0] <= 1267);
pts.push([1267, 580]);
document.getElementById('pressure').setAttribute('d', 'M' + pts.map(p => p[0].toFixed(1) + ' ' + p[1].toFixed(1)).join('L'));

// synchronisation sensor pulses
const main = [668,682,691,698,700,662,679,680,679,678,687,690];
const dips = [776,777,782,780,770,779,776,782,770,781,785,787];
const mids = [731,729,721,722,724,728,727,731,728,730,715,730];
let d = 'M39 756.5';
main.forEach((m, i) => {
  const x = Math.floor(59 + i * 101.27) + 0.5;
  d += `H${x-2}V760L${x-1} 710L${x} ${m}L${x+1} 705L${x+2} 745L${x+3} 756.5H${x+16}L${x+21} 755L${x+23} 743L${x+25} 754L${x+27} 749L${x+31} 756.5H${x+46}`
    + `L${x+48} 750L${x+49} 757L${x+50} ${dips[i]}L${x+51} 767L${x+52} 755L${x+55} 756L${x+64} 755L${x+66} 756.5H${x+74}L${x+75} 743L${x+76} ${mids[i]}L${x+77} 740L${x+78} 754L${x+79} 756.5`;
});
document.getElementById('sync').setAttribute('d', d + 'H1267');
</script>
</body>
</html>
